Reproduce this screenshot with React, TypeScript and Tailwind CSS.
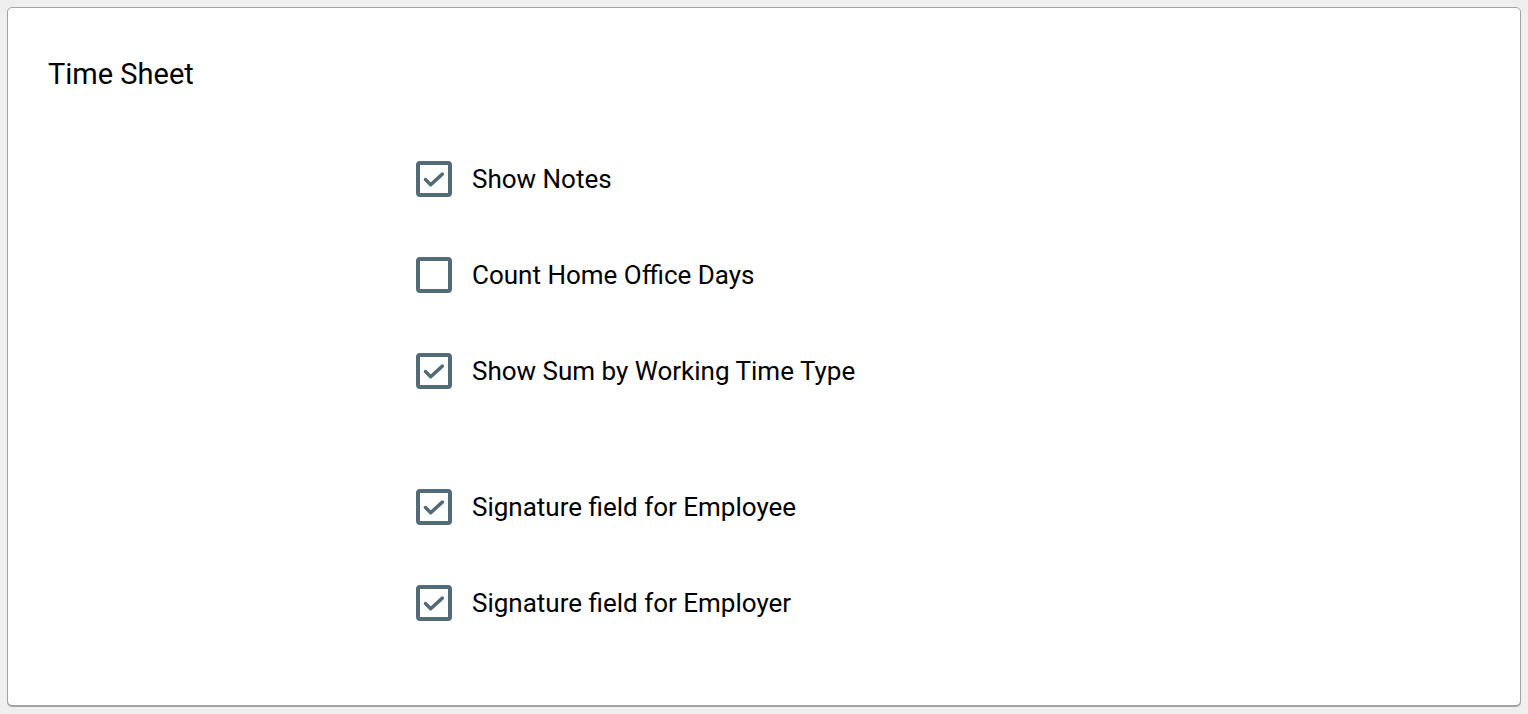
import { useState } from "react";

type Option = { id: string; label: string; checked: boolean; gapBefore?: boolean };

const initial: Option[] = [
  { id: "notes", label: "Show Notes", checked: true },
  { id: "homeOffice", label: "Count Home Office Days", checked: false },
  { id: "sumByType", label: "Show Sum by Working Time Type", checked: true },
  { id: "sigEmployee", label: "Signature field for Employee", checked: true, gapBefore: true },
  { id: "sigEmployer", label: "Signature field for Employer", checked: true },
];

const CheckBox = ({ checked }: { checked: boolean }) => (
  <span className="w-9 h-9 shrink-0 border-4 border-[#526b77] rounded-[4px] flex items-center justify-center bg-white">
    {checked && (
      <svg width="28" height="28" viewBox="0 0 28 28" fill="none">
        <path d="M5.5 14.5l5.2 5.2 11.6-10.6" stroke="#526b77" strokeWidth="3.5" strokeLinecap="round" strokeLinejoin="round" />
      </svg>
    )}
  </span>
);

export default function App() {
  const [options, setOptions] = useState(initial);

  const toggle = (id: string) =>
    setOptions((prev) => prev.map((o) => (o.id === id ? { ...o, checked: !o.checked } : o)));

  return (
    <div className="min-h-[714px] bg-[#efefef] p-[7px] font-['Roboto',sans-serif] text-black">
      <div className="h-[699px] bg-white border border-[#a3a3a3] rounded-[5px] shadow-[0_1px_0_#a3a3a3] pt-[51px] pl-[40px]">
        <h2 className="text-[29px] leading-[30px]">Time Sheet</h2>

        <div className="flex flex-col pl-[368px] mt-[72px]">
          {options.map((o) => (
            <label
              key={o.id}
              onClick={() => toggle(o.id)}
              className={`flex items-center gap-5 h-9 cursor-pointer ${o.gapBefore ? "mt-[100px]" : "mt-[60px] first:mt-0"}`}
            >
              <CheckBox checked={o.checked} />
              <span className="text-[26px] leading-none">{o.label}</span>
            </label>
          ))}
        </div>
      </div>
    </div>
  );
}
